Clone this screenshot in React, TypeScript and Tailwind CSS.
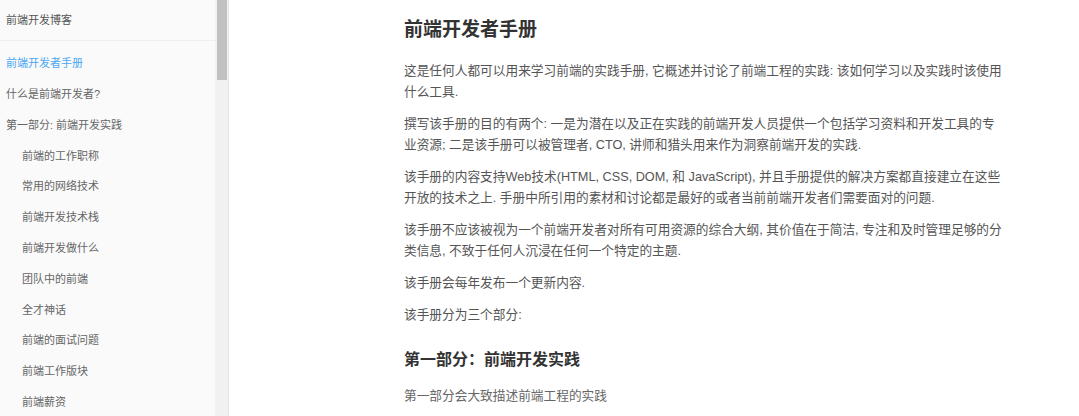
import React from "react";

interface NavItem {
  title: string;
  level: number;
  active?: boolean;
}

const navItems: NavItem[] = [
  { title: "前端开发者手册", level: 0, active: true },
  { title: "什么是前端开发者?", level: 0 },
  { title: "第一部分: 前端开发实践", level: 0 },
  { title: "前端的工作职称", level: 1 },
  { title: "常用的网络技术", level: 1 },
  { title: "前端开发技术栈", level: 1 },
  { title: "前端开发做什么", level: 1 },
  { title: "团队中的前端", level: 1 },
  { title: "全才神话", level: 1 },
  { title: "前端的面试问题", level: 1 },
  { title: "前端工作版块", level: 1 },
  { title: "前端薪资", level: 1 },
];

const paragraphs = [
  "这是任何人都可以用来学习前端的实践手册, 它概述并讨论了前端工程的实践: 该如何学习以及实践时该使用什么工具.",
  "撰写该手册的目的有两个: 一是为潜在以及正在实践的前端开发人员提供一个包括学习资料和开发工具的专业资源; 二是该手册可以被管理者, CTO, 讲师和猎头用来作为洞察前端开发的实践.",
  "该手册的内容支持Web技术(HTML, CSS, DOM, 和 JavaScript), 并且手册提供的解决方案都直接建立在这些开放的技术之上. 手册中所引用的素材和讨论都是最好的或者当前前端开发者们需要面对的问题.",
  "该手册不应该被视为一个前端开发者对所有可用资源的综合大纲, 其价值在于简洁, 专注和及时管理足够的分类信息, 不致于任何人沉浸在任何一个特定的主题.",
  "该手册会每年发布一个更新内容.",
  "该手册分为三个部分:",
];

const Sidebar: React.FC = () => {
  return (
    <aside className="w-[215px] shrink-0 h-full bg-[#fafafa] overflow-hidden">
      <div className="h-[41px] flex items-center px-[6px] text-[11px] text-[#555] border-b border-[#eeeeee]">
        前端开发博客
      </div>
      <ul className="pt-[7px]">
        {navItems.map((item) => (
          <li
            key={item.title}
            className={`h-[30.8px] flex items-center text-[11px] whitespace-nowrap ${
              item.level === 1 ? "pl-[22px]" : "pl-[6px]"
            } ${item.active ? "text-[#4ba6f3]" : "text-[#666]"}`}
          >
            {item.title}
          </li>
        ))}
      </ul>
    </aside>
  );
};

export default function App() {
  return (
    <div
      className="flex w-[1079px] h-[416px] overflow-hidden bg-white"
      style={{ fontFamily: '"Liberation Sans", "Noto Sans CJK SC", sans-serif' }}
    >
      <Sidebar />
      {/* scrollbar */}
      <div className="w-[13px] shrink-0 h-full bg-[#f1f1f1] px-[1.5px]">
        <div className="h-[80px] w-full bg-[#c1c1c1]" />
      </div>
      <div className="w-px shrink-0 h-full bg-[#e6e6e6]" />
      <main className="flex-1 h-full overflow-hidden pl-[175px] pt-[16px]">
        <div className="w-[602px]">
          <h1 className="text-[19px] font-bold text-[#333] leading-[28.5px]">
            前端开发者手册
          </h1>
          <div className="mt-[16px] flex flex-col gap-[11px]">
            {paragraphs.map((p) => (
              <p key={p} className="text-[12.7px] leading-[21px] text-[#555]">
                {p}
              </p>
            ))}
          </div>
          <h2 className="mt-[22.5px] text-[16px] font-bold text-[#333] leading-[24px]">
            第一部分：前端开发实践
          </h2>
          <p className="mt-[14px] text-[12.7px] leading-[21px] text-[#666]">
            第一部分会大致描述前端工程的实践
          </p>
        </div>
      </main>
    </div>
  );
}
